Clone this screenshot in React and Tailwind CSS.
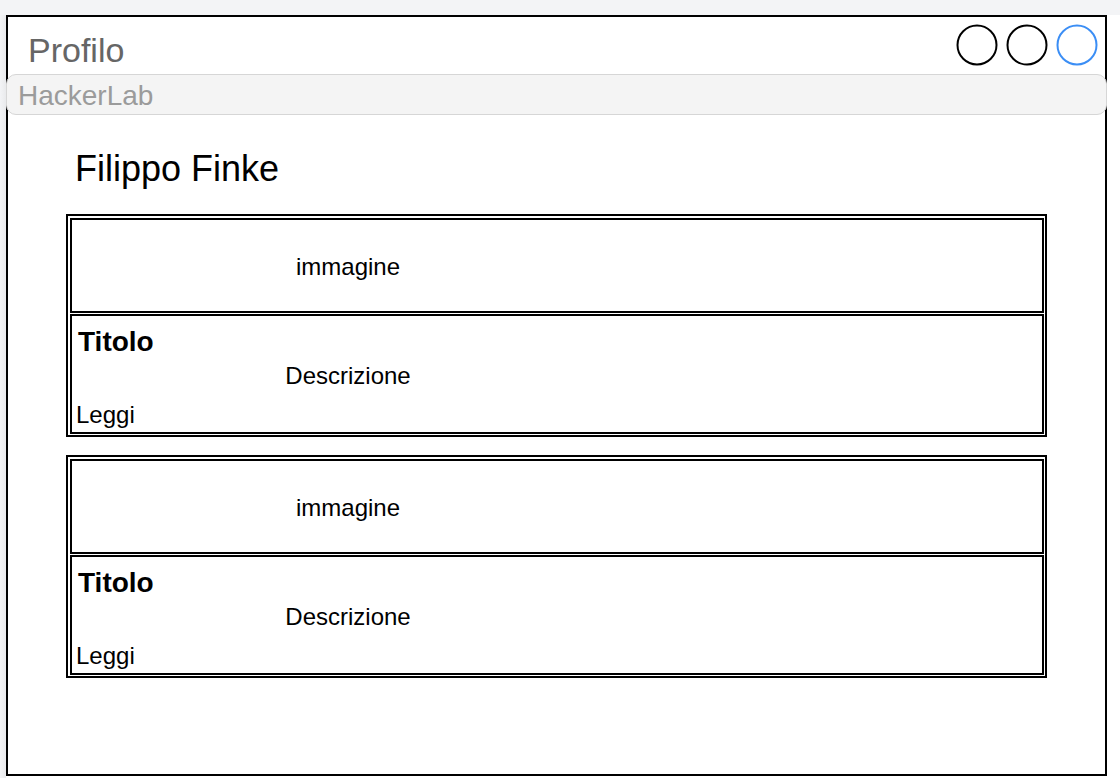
import React from "react";

function Circle({ color }) {
  return (
    <svg width="42" height="42" viewBox="0 0 42 42">
      <circle cx="21" cy="21" r="19.5" fill="none" stroke={color} strokeWidth="2" />
    </svg>
  );
}

function Card() {
  return (
    <div className="w-[981px] border-2 border-black pt-[2px] pl-[2px] pr-[1px] pb-[1px] flex flex-col gap-[1px]">
      <div className="h-[95px] border-2 border-black flex items-center">
        <div className="w-[552px] text-center text-[24px] leading-[28px] text-black pt-[2px]">immagine</div>
      </div>
      <div className="h-[120px] border-2 border-black flex flex-col">
        <div className="mt-[10px] ml-[6px] text-[28px] leading-[32px] font-bold text-black">Titolo</div>
        <div className="mt-[4px] w-[552px] text-center text-[24px] leading-[28px] text-black">Descrizione</div>
        <div className="mt-[11px] ml-[4px] text-[24px] leading-[28px] text-black">Leggi</div>
      </div>
    </div>
  );
}

export default function App() {
  return (
    <div
      className="w-[1120px] h-[778px] bg-white flex flex-col overflow-hidden"
      style={{ fontFamily: '"Liberation Sans", Arial, Helvetica, sans-serif' }}
    >
      <div className="h-[15px] bg-[#f3f4f6] shrink-0" />
      <div className="flex">
        <div className="w-[6px] h-[763px] bg-gradient-to-r from-[#f3f4f6] to-[#e9eaec]" />
        <div className="w-[1101px] h-[761px] border-2 border-black flex flex-col">
          <div className="h-[57px] flex justify-between items-start">
            <div className="ml-[20px] mt-[14px] text-[34px] leading-[38px] text-[#666666]">Profilo</div>
            <div className="mt-[7px] mr-[7px] flex gap-[8px]">
              <Circle color="#000000" />
              <Circle color="#000000" />
              <Circle color="#3b8ef5" />
            </div>
          </div>
          <div className="-mx-[2px] h-[41px] rounded-[10px] border border-[#d6d6d6] bg-[#f4f4f4] pl-[11px] pt-[5px] text-[28px] leading-[32px] text-[#9b9b9b]">
            HackerLab
          </div>
          <div className="ml-[67px] mt-[33px] text-[36px] leading-[41px] text-black">Filippo Finke</div>
          <div className="ml-[58px] mt-[25px] flex flex-col gap-[18px]">
            <Card />
            <Card />
          </div>
        </div>
      </div>
    </div>
  );
}
